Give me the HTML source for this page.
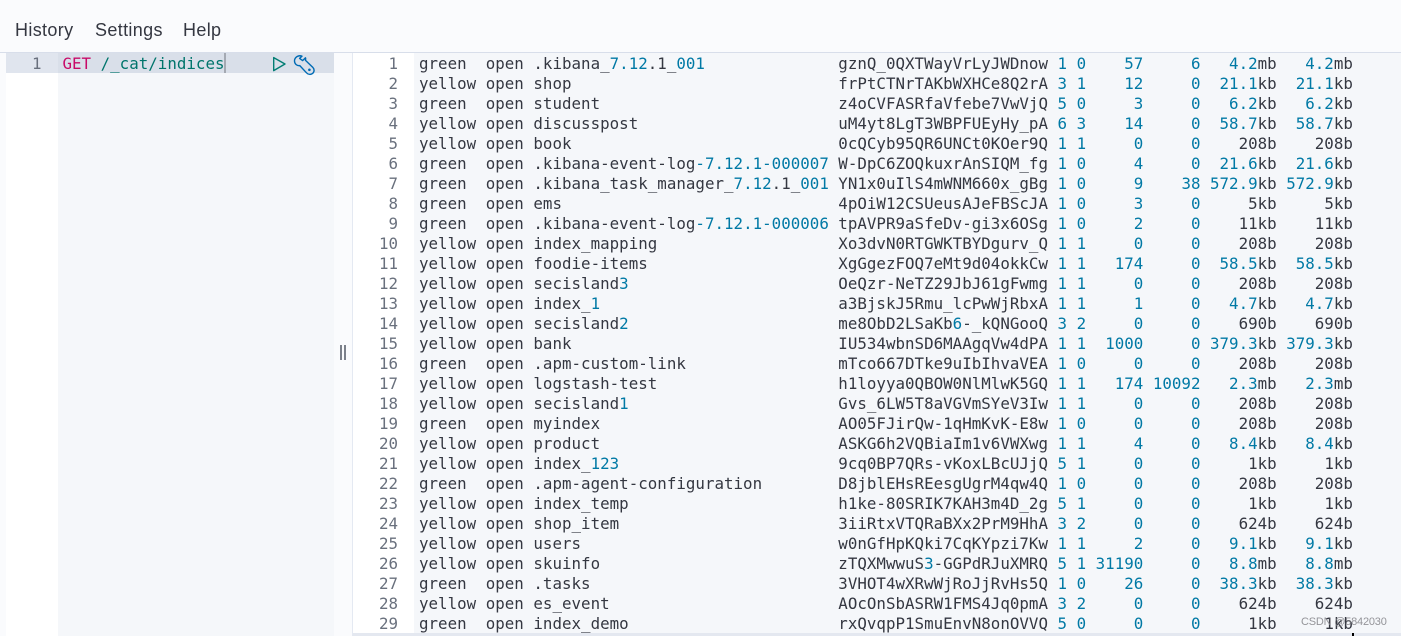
<!DOCTYPE html>
<html lang="en">
<head>
<meta charset="utf-8">
<title>Console</title>
<style>
html,body{margin:0;padding:0}
body{width:1401px;height:636px;position:relative;overflow:hidden;background:#fafbfd;font-family:"Liberation Sans",sans-serif}
.top{position:absolute;left:0;top:0;width:1401px;height:52px;background:#fafbfd;border-bottom:1px solid #d8deea}
.m{position:absolute;top:18px;font-size:18px;line-height:24px;color:#343741;letter-spacing:.35px}
.abs{position:absolute}
.mono,.r{font-family:"DejaVu Sans Mono","Liberation Mono",monospace;font-size:15.8px;letter-spacing:.02px;line-height:20px;color:#343741}
.r{position:absolute;left:0;width:1401px;height:20px}
.r i{position:absolute;top:1px;font-style:normal;white-space:pre}
.r b{font-weight:normal;color:#0079a5}
.r i:nth-child(1){right:1003px;color:#69707d}
.r i:nth-child(2){left:419px}
.r i:nth-child(3){left:485.7px}
.r i:nth-child(4){left:533.4px}
.r i:nth-child(5){left:838.3px}
.r i:nth-child(6){left:1057.5px;color:#0079a5}
.r i:nth-child(7){left:1076.6px;color:#0079a5}
.r i:nth-child(8){right:257.7px;color:#0079a5}
.r i:nth-child(9){right:200.5px;color:#0079a5}
.r i:nth-child(10){right:124.3px}
.r i:nth-child(11){right:48.1px}
</style>
</head>
<body>
<div class="top"></div>
<div class="m" style="left:15px">History</div>
<div class="m" style="left:95px">Settings</div>
<div class="m" style="left:183px">Help</div>

<!-- left editor -->
<div class="abs" style="left:6px;top:53px;width:52px;height:583px;background:#fff"></div>
<div class="abs" style="left:58px;top:53px;width:276px;height:583px;background:#f5f7fa"></div>
<div class="abs" style="left:6px;top:53px;width:52px;height:20px;background:#e0e5ee"></div>
<div class="abs" style="left:58px;top:53px;width:276px;height:20px;background:#d9dfe9"></div>
<div class="abs mono" style="left:32px;top:54px;color:#69707d">1</div>
<div class="abs mono" style="left:62.5px;top:54px;white-space:pre"><span style="color:#c80a68">GET</span> <span style="color:#00756c">/_cat/indices</span></div>
<div class="abs" style="left:224px;top:53px;width:2px;height:20px;background:#a4a9b2"></div>
<svg class="abs" style="left:270px;top:54px" width="18" height="20" viewBox="0 0 18 20"><path d="M3.7 3.6 L15 10 L3.7 16.6 Z" fill="none" stroke="#017d73" stroke-width="1.4" stroke-linejoin="round"/></svg>
<svg class="abs" style="left:293px;top:54px" width="23" height="22" viewBox="0 0 23 22"><path d="M9 2.2 C5.5 .8 1.5 3.2 1.5 7 C1.5 9.8 3.8 12 6.8 11.6 L13.5 18.8 C15.3 20.8 18 20.8 19.8 19.3 C21.6 17.6 21.4 15 19.8 13.4 L12.4 6.2 C12.8 5.3 12.8 4.5 12.5 3.8 L9.6 6.6 L6.6 4.4 Z" fill="none" stroke="#006bb4" stroke-width="1.4" stroke-linejoin="round" stroke-linecap="round"/><circle cx="16.4" cy="15.8" r="1.3" fill="#006bb4"/></svg>

<!-- resizer -->
<div class="abs" style="left:340px;top:345px;width:2px;height:15px;background:#7b808a"></div>
<div class="abs" style="left:344px;top:345px;width:2px;height:15px;background:#7b808a"></div>

<!-- right output -->
<div class="abs" style="left:352px;top:53px;width:1px;height:583px;background:#e4e9f2"></div>
<div class="abs" style="left:353px;top:53px;width:61px;height:583px;background:#fff"></div>
<div class="abs" style="left:414px;top:53px;width:987px;height:583px;background:#f5f7fa"></div>

<div class="r" style="top:53px"><i>1</i><i>green</i><i>open</i><i>.kibana_<b>7.12</b>.1_<b>001</b></i><i>gznQ_0QXTWayVrLyJWDnow</i><i>1</i><i>0</i><i>57</i><i>6</i><i><b>4.2</b>mb</i><i><b>4.2</b>mb</i></div>
<div class="r" style="top:73px"><i>2</i><i>yellow</i><i>open</i><i>shop</i><i>frPtCTNrTAKbWXHCe8Q2rA</i><i>3</i><i>1</i><i>12</i><i>0</i><i><b>21.1</b>kb</i><i><b>21.1</b>kb</i></div>
<div class="r" style="top:93px"><i>3</i><i>green</i><i>open</i><i>student</i><i>z4oCVFASRfaVfebe7VwVjQ</i><i>5</i><i>0</i><i>3</i><i>0</i><i><b>6.2</b>kb</i><i><b>6.2</b>kb</i></div>
<div class="r" style="top:113px"><i>4</i><i>yellow</i><i>open</i><i>discusspost</i><i>uM4yt8LgT3WBPFUEyHy_pA</i><i>6</i><i>3</i><i>14</i><i>0</i><i><b>58.7</b>kb</i><i><b>58.7</b>kb</i></div>
<div class="r" style="top:133px"><i>5</i><i>yellow</i><i>open</i><i>book</i><i>0cQCyb95QR6UNCt0KOer9Q</i><i>1</i><i>1</i><i>0</i><i>0</i><i>208b</i><i>208b</i></div>
<div class="r" style="top:153px"><i>6</i><i>green</i><i>open</i><i>.kibana-event-log<b>-7.12.1-000007</b></i><i>W-DpC6ZOQkuxrAnSIQM_fg</i><i>1</i><i>0</i><i>4</i><i>0</i><i><b>21.6</b>kb</i><i><b>21.6</b>kb</i></div>
<div class="r" style="top:173px"><i>7</i><i>green</i><i>open</i><i>.kibana_task_manager_<b>7.12</b>.1_<b>001</b></i><i>YN1x0uIlS4mWNM660x_gBg</i><i>1</i><i>0</i><i>9</i><i>38</i><i><b>572.9</b>kb</i><i><b>572.9</b>kb</i></div>
<div class="r" style="top:193px"><i>8</i><i>green</i><i>open</i><i>ems</i><i>4pOiW12CSUeusAJeFBScJA</i><i>1</i><i>0</i><i>3</i><i>0</i><i>5kb</i><i>5kb</i></div>
<div class="r" style="top:213px"><i>9</i><i>green</i><i>open</i><i>.kibana-event-log<b>-7.12.1-000006</b></i><i>tpAVPR9aSfeDv-gi3x6OSg</i><i>1</i><i>0</i><i>2</i><i>0</i><i>11kb</i><i>11kb</i></div>
<div class="r" style="top:233px"><i>10</i><i>yellow</i><i>open</i><i>index_mapping</i><i>Xo3dvN0RTGWKTBYDgurv_Q</i><i>1</i><i>1</i><i>0</i><i>0</i><i>208b</i><i>208b</i></div>
<div class="r" style="top:253px"><i>11</i><i>yellow</i><i>open</i><i>foodie-items</i><i>XgGgezFOQ7eMt9d04okkCw</i><i>1</i><i>1</i><i>174</i><i>0</i><i><b>58.5</b>kb</i><i><b>58.5</b>kb</i></div>
<div class="r" style="top:273px"><i>12</i><i>yellow</i><i>open</i><i>secisland<b>3</b></i><i>OeQzr-NeTZ29JbJ61gFwmg</i><i>1</i><i>1</i><i>0</i><i>0</i><i>208b</i><i>208b</i></div>
<div class="r" style="top:293px"><i>13</i><i>yellow</i><i>open</i><i>index_<b>1</b></i><i>a3BjskJ5Rmu_lcPwWjRbxA</i><i>1</i><i>1</i><i>1</i><i>0</i><i><b>4.7</b>kb</i><i><b>4.7</b>kb</i></div>
<div class="r" style="top:313px"><i>14</i><i>yellow</i><i>open</i><i>secisland<b>2</b></i><i>me8ObD2LSaKb<b>6</b>-_kQNGooQ</i><i>3</i><i>2</i><i>0</i><i>0</i><i>690b</i><i>690b</i></div>
<div class="r" style="top:333px"><i>15</i><i>yellow</i><i>open</i><i>bank</i><i>IU534wbnSD6MAAgqVw4dPA</i><i>1</i><i>1</i><i>1000</i><i>0</i><i><b>379.3</b>kb</i><i><b>379.3</b>kb</i></div>
<div class="r" style="top:353px"><i>16</i><i>green</i><i>open</i><i>.apm-custom-link</i><i>mTco667DTke9uIbIhvaVEA</i><i>1</i><i>0</i><i>0</i><i>0</i><i>208b</i><i>208b</i></div>
<div class="r" style="top:373px"><i>17</i><i>yellow</i><i>open</i><i>logstash-test</i><i>h1loyya0QBOW0NlMlwK5GQ</i><i>1</i><i>1</i><i>174</i><i>10092</i><i><b>2.3</b>mb</i><i><b>2.3</b>mb</i></div>
<div class="r" style="top:393px"><i>18</i><i>yellow</i><i>open</i><i>secisland<b>1</b></i><i>Gvs_6LW5T8aVGVmSYeV3Iw</i><i>1</i><i>1</i><i>0</i><i>0</i><i>208b</i><i>208b</i></div>
<div class="r" style="top:413px"><i>19</i><i>green</i><i>open</i><i>myindex</i><i>AO05FJirQw-1qHmKvK-E8w</i><i>1</i><i>0</i><i>0</i><i>0</i><i>208b</i><i>208b</i></div>
<div class="r" style="top:433px"><i>20</i><i>yellow</i><i>open</i><i>product</i><i>ASKG6h2VQBiaIm1v6VWXwg</i><i>1</i><i>1</i><i>4</i><i>0</i><i><b>8.4</b>kb</i><i><b>8.4</b>kb</i></div>
<div class="r" style="top:453px"><i>21</i><i>yellow</i><i>open</i><i>index_<b>123</b></i><i>9cq0BP7QRs-vKoxLBcUJjQ</i><i>5</i><i>1</i><i>0</i><i>0</i><i>1kb</i><i>1kb</i></div>
<div class="r" style="top:473px"><i>22</i><i>green</i><i>open</i><i>.apm-agent-configuration</i><i>D8jblEHsREesgUgrM4qw4Q</i><i>1</i><i>0</i><i>0</i><i>0</i><i>208b</i><i>208b</i></div>
<div class="r" style="top:493px"><i>23</i><i>yellow</i><i>open</i><i>index_temp</i><i>h1ke-80SRIK7KAH3m4D_2g</i><i>5</i><i>1</i><i>0</i><i>0</i><i>1kb</i><i>1kb</i></div>
<div class="r" style="top:513px"><i>24</i><i>yellow</i><i>open</i><i>shop_item</i><i>3iiRtxVTQRaBXx2PrM9HhA</i><i>3</i><i>2</i><i>0</i><i>0</i><i>624b</i><i>624b</i></div>
<div class="r" style="top:533px"><i>25</i><i>yellow</i><i>open</i><i>users</i><i>w0nGfHpKQki7CqKYpzi7Kw</i><i>1</i><i>1</i><i>2</i><i>0</i><i><b>9.1</b>kb</i><i><b>9.1</b>kb</i></div>
<div class="r" style="top:553px"><i>26</i><i>yellow</i><i>open</i><i>skuinfo</i><i>zTQXMwwuS<b>3</b>-GGPdRJuXMRQ</i><i>5</i><i>1</i><i>31190</i><i>0</i><i><b>8.8</b>mb</i><i><b>8.8</b>mb</i></div>
<div class="r" style="top:573px"><i>27</i><i>green</i><i>open</i><i>.tasks</i><i>3VHOT4wXRwWjRoJjRvHs5Q</i><i>1</i><i>0</i><i>26</i><i>0</i><i><b>38.3</b>kb</i><i><b>38.3</b>kb</i></div>
<div class="r" style="top:593px"><i>28</i><i>yellow</i><i>open</i><i>es_event</i><i>AOcOnSbASRW1FMS4Jq0pmA</i><i>3</i><i>2</i><i>0</i><i>0</i><i>624b</i><i>624b</i></div>
<div class="r" style="top:613px"><i>29</i><i>green</i><i>open</i><i>index_demo</i><i>rxQvqpP1SmuEnvN8onOVVQ</i><i>5</i><i>0</i><i>0</i><i>0</i><i>1kb</i><i>1kb</i></div>

<div class="abs" style="left:353px;top:633px;width:1048px;height:3px;background:#e4e8f0"></div>
<div class="abs" style="left:1352px;top:633px;width:2px;height:3px;background:#000"></div>
<div class="abs" style="left:1301px;top:614px;font-size:11px;line-height:16px;color:rgba(130,130,135,.85);letter-spacing:-.2px;white-space:nowrap">CSDN @5842030</div>
</body>
</html>
